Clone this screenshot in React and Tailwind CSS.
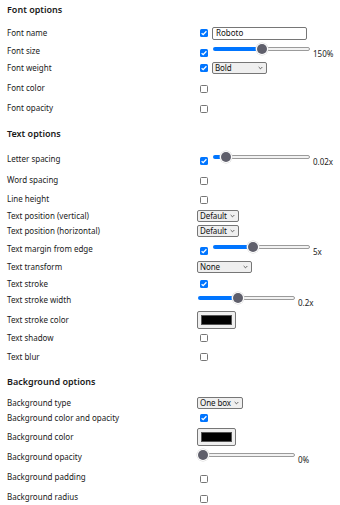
import React from "react";

const font = { fontFamily: '"Noto Sans", "Open Sans", sans-serif' };

function Check({ on, className = "mt-[2px]" }) {
    return (
        <span
            className={`ml-[3px] w-[8px] h-[8px] rounded-[1.5px] flex items-center justify-center shrink-0 ${className} ${
                on ? "bg-[#0075ff]" : "bg-white border border-[#767676]"
            }`}
        >
            {on && (
                <svg viewBox="0 0 8 8" className="w-[8px] h-[8px]">
                    <path
                        d="M1.6 4.2l1.6 1.5 3.2-3.4"
                        fill="none"
                        stroke="white"
                        strokeWidth="1.3"
                    />
                </svg>
            )}
        </span>
    );
}

function Chevron() {
    return (
        <svg viewBox="0 0 6 4" className="w-[5px] h-[4px] shrink-0">
            <path d="M0.8 0.8l2.2 2.2 2.2-2.2" fill="none" stroke="#333" strokeWidth="0.9" />
        </svg>
    );
}

function Select({ text, width }) {
    return (
        <div
            className={`h-[12px] ${width} bg-[#efefef] border border-[#767676] rounded-[2px] flex items-center justify-between gap-[2px] pl-[2px] pr-[3px] text-[8px] leading-none text-[#111]`}
        >
            <span className="tracking-[-0.1px]">{text}</span>
            <Chevron />
        </div>
    );
}

function Slider({ pos, value }) {
    return (
        <div className="flex items-center">
            <div className="w-[97px] h-[10px] flex items-center mb-[4px]">
                {pos > 5 && (
                    <div
                        className="h-[4px] bg-[#0075ff] rounded-l-full shrink-0"
                        style={{ width: pos - 5 }}
                    />
                )}
                <div className="w-[10px] h-[10px] rounded-full bg-[#5f5f6b] ring-1 ring-white shadow-[0_0_0_1.5px_#d6d6d6] shrink-0 z-10" />
                <div className="flex-1 h-[4px] bg-[#f2f2f2] border border-[#9b9b9b] rounded-r-full" />
            </div>
            <span className="ml-[3px] mt-[6px] text-[8px] leading-none text-[#1a1a1a]">{value}</span>
        </div>
    );
}

function Swatch() {
    return (
        <div className="w-[39px] h-[18px] bg-[#efefef] border border-[#767676] rounded-[2px] flex p-[3px]">
            <div className="flex-1 bg-black border border-[#555]" />
        </div>
    );
}

function Heading({ text, mt }) {
    return (
        <div className={`h-[14px] flex items-center ${mt}`}>
            <h3 className="text-[9px] font-semibold leading-none text-[#1a1a1a]">{text}</h3>
        </div>
    );
}

function Row({ label, mt, children }) {
    return (
        <div className={`h-[14px] flex items-center ${mt}`}>
            <div className="w-[190px] shrink-0 text-[8px] leading-none text-[#1a1a1a]">{label}</div>
            <div className="flex items-center">{children}</div>
        </div>
    );
}

export default function App() {
    return (
        <div className="w-[340px] h-[505px] bg-white overflow-hidden pl-[7px] pt-[2px]" style={font}>
            <Heading text="Font options" mt="mt-0" />
            <Row label="Font name" mt="mt-[10px]">
                <Check on className="mt-0" />
                <div className="ml-[4px] w-[95px] h-[13px] bg-white border border-[#767676] rounded-[2px] flex items-center pl-[3px] text-[8px] leading-none text-[#111]">
                    Roboto
                </div>
            </Row>
            <Row label="Font size" mt="mt-[4px]">
                <Check on className="mt-[4px]" />
                <div className="ml-[5px]">
                    <Slider pos={49} value="150%" />
                </div>
            </Row>
            <Row label="Font weight" mt="mt-[3px]">
                <Check on className="mt-0" />
                <div className="ml-[4px]">
                    <Select text="Bold" width="w-[55px]" />
                </div>
            </Row>
            <Row label="Font color" mt="mt-[6px]">
                <Check />
            </Row>
            <Row label="Font opacity" mt="mt-[6px]">
                <Check />
            </Row>

            <Heading text="Text options" mt="mt-[11px]" />
            <Row label="Letter spacing" mt="mt-[12px]">
                <Check on className="mt-[4px]" />
                <div className="ml-[5px]">
                    <Slider pos={13} value="0.02x" />
                </div>
            </Row>
            <Row label="Word spacing" mt="mt-[7px]">
                <Check />
            </Row>
            <Row label="Line height" mt="mt-[5px]">
                <Check />
            </Row>
            <Row label="Text position (vertical)" mt="mt-[3px]">
                <Select text="Default" width="w-[42px]" />
            </Row>
            <Row label="Text position (horizontal)" mt="mt-[1px]">
                <Select text="Default" width="w-[42px]" />
            </Row>
            <Row label="Text margin from edge" mt="mt-[4px]">
                <Check on className="mt-[4px]" />
                <div className="ml-[5px]">
                    <Slider pos={40} value="5x" />
                </div>
            </Row>
            <Row label="Text transform" mt="mt-[4px]">
                <Select text="None" width="w-[55px]" />
            </Row>
            <Row label="Text stroke" mt="mt-[3px]">
                <Check on className="mt-0" />
            </Row>
            <Row label="Text stroke width" mt="mt-[2px]">
                <div className="ml-px">
                    <Slider pos={40} value="0.2x" />
                </div>
            </Row>
            <Row label="Text stroke color" mt="mt-[6px]">
                <Swatch />
            </Row>
            <Row label="Text shadow" mt="mt-[4px]">
                <Check className="mt-0" />
            </Row>
            <Row label="Text blur" mt="mt-[5px]">
                <Check className="mt-0" />
            </Row>

            <Heading text="Background options" mt="mt-[10px]" />
            <Row label="Background type" mt="mt-[8px]">
                <Select text="One box" width="w-[46px]" />
            </Row>
            <Row label="Background color and opacity" mt="mt-[1px]">
                <Check on className="mt-0" />
            </Row>
            <Row label="Background color" mt="mt-[5px]">
                <Swatch />
            </Row>
            <Row label="Background opacity" mt="mt-[6px]">
                <div className="ml-px">
                    <Slider pos={5} value="0%" />
                </div>
            </Row>
            <Row label="Background padding" mt="mt-[6px]">
                <Check className="mt-[4px]" />
            </Row>
            <Row label="Background radius" mt="mt-[6px]">
                <Check className="mt-[4px]" />
            </Row>
        </div>
    );
}
